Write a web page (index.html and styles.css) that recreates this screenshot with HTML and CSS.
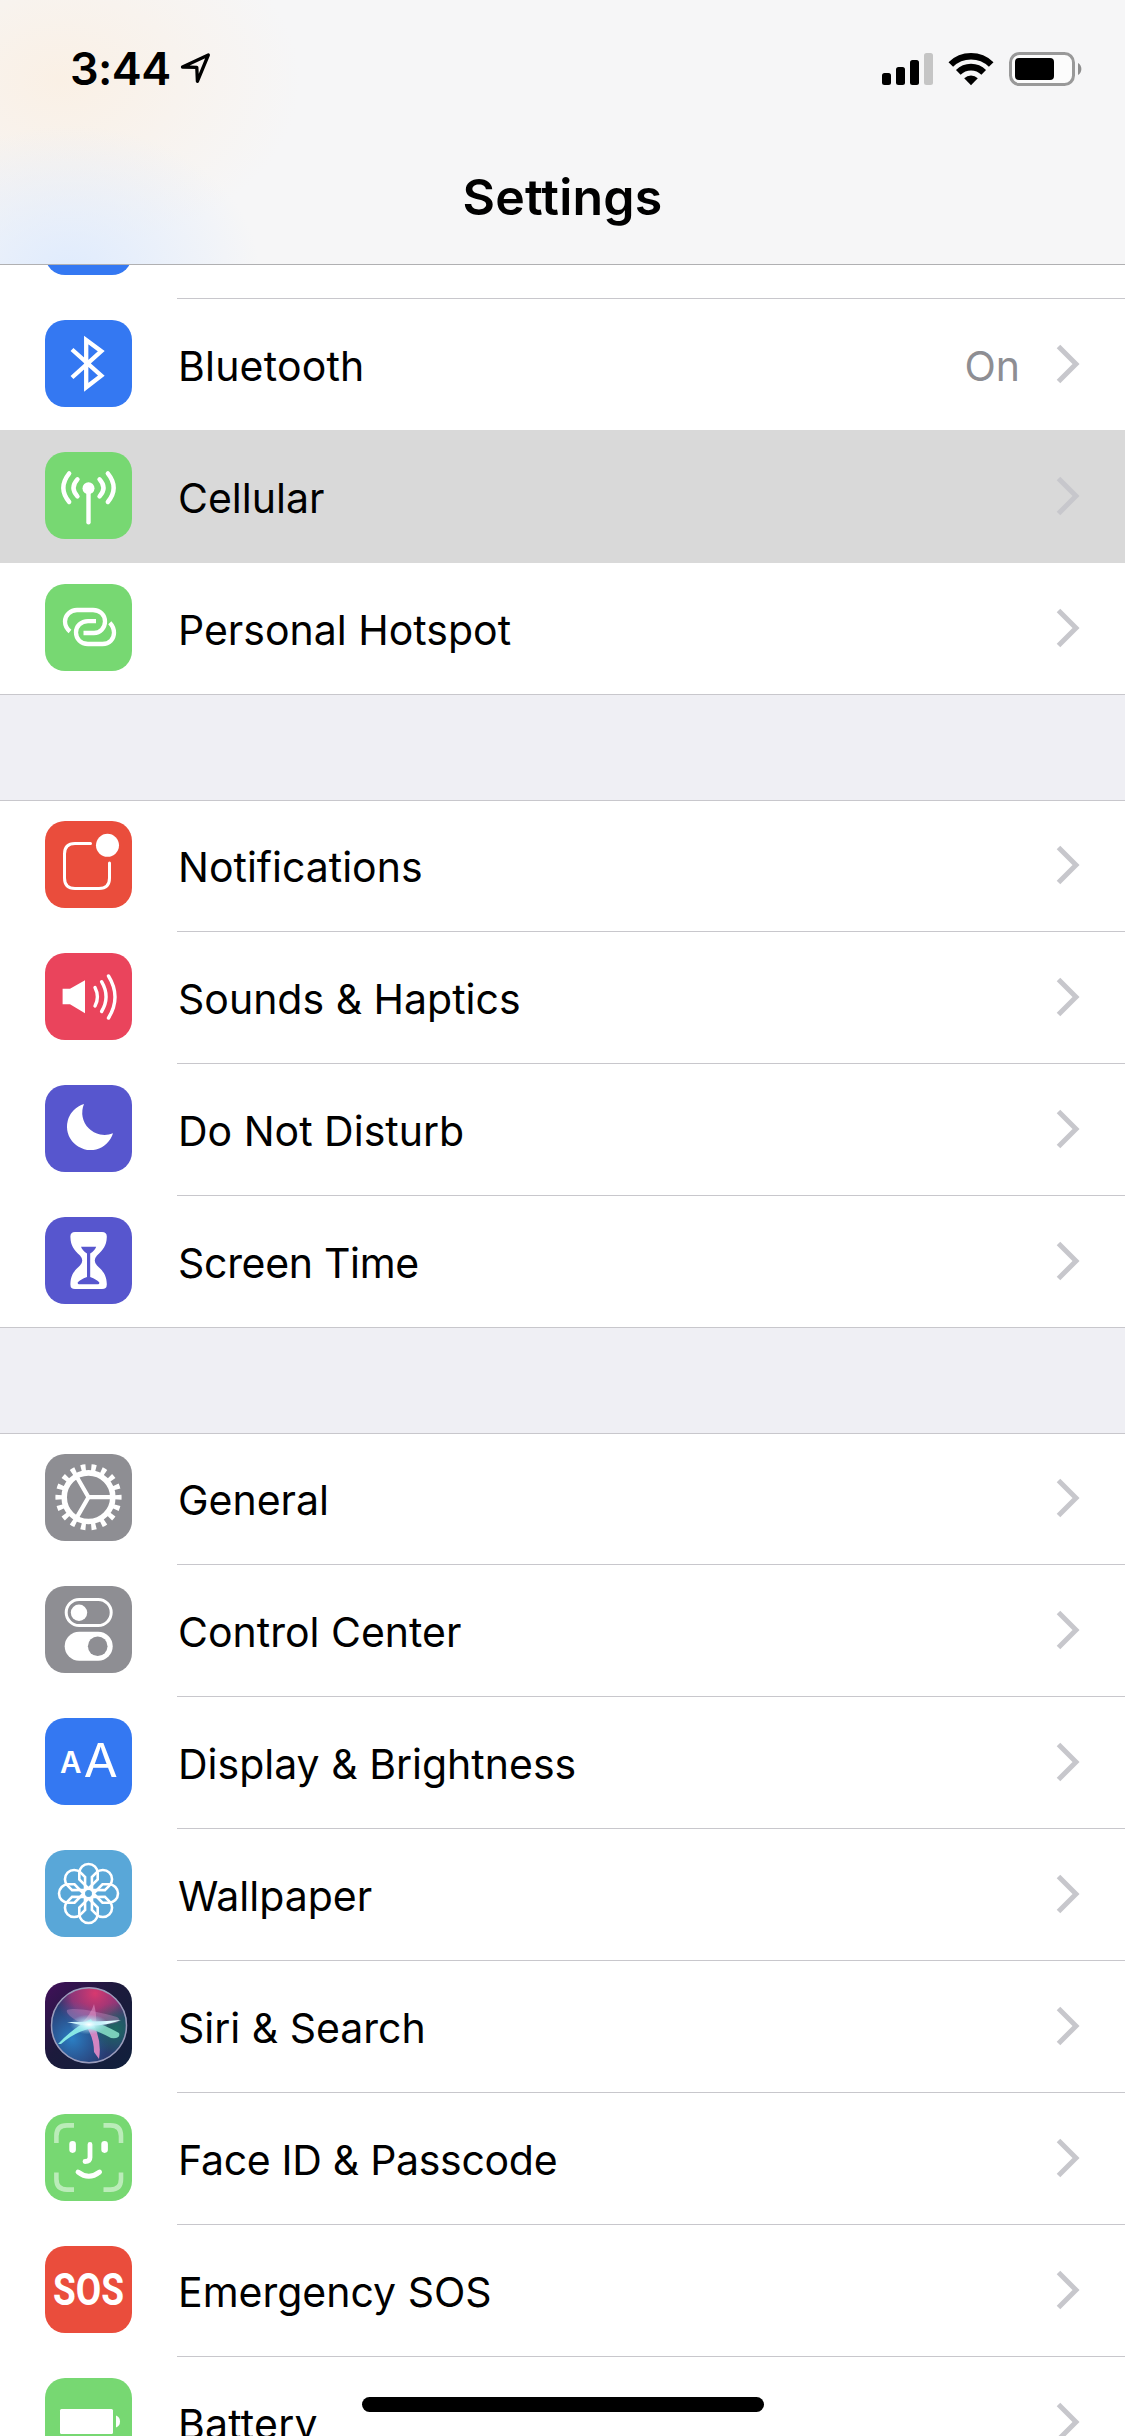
FILE: index.html
```html
<!DOCTYPE html>
<html lang="en">
<head>
    <meta charset="utf-8">
    <title>Settings</title>
    <link rel="stylesheet" href="styles.css">
</head>
<body>
    <svg class="defs" width="0" height="0">
        <defs>
            <symbol id="chevron" viewBox="0 0 24 40">
                <path d="M2.5 2.5 L20 20 L2.5 37.5" fill="none" stroke="#c7c7cc" stroke-width="5"/>
            </symbol>
            <path id="petal" d="M43.5 38.5 L34.3 29.5 V23.2 A9.2 9.2 0 0 1 52.7 23.2 V29.5 Z"/>
        </defs>
    </svg>

    <header class="header">
        <div class="status-bar">
            <div class="status-left">
                <span class="time">3:44</span>
                <svg class="location" width="32" height="32" viewBox="0 0 32 32">
                    <path d="M2.5 15 L28.3 3 L17.4 29.3 L16.8 15.4 Z" fill="none" stroke="#000" stroke-width="3.3" stroke-linejoin="round"/>
                </svg>
            </div>
            <div class="status-right">
                <svg width="51" height="34" viewBox="0 0 51 34">
                    <rect x="0" y="21" width="9" height="12" rx="2.5"/>
                    <rect x="14" y="15" width="9" height="18" rx="2.5"/>
                    <rect x="28" y="8" width="9" height="25" rx="2.5"/>
                    <rect x="42" y="1" width="9" height="32" rx="2.5" fill="#c5c5c5"/>
                </svg>
                <svg width="46" height="34" viewBox="0 0 46 34">
                    <g fill="none" stroke="#000" stroke-width="6.6">
                        <path d="M2.8 12.5 A29 29 0 0 1 43.2 12.5"/>
                        <path d="M10.3 20.4 A18 18 0 0 1 35.7 20.4"/>
                    </g>
                    <path d="M23 33.2 L16.2 26.2 A10 10 0 0 1 29.8 26.2 Z"/>
                </svg>
                <svg width="75" height="34" viewBox="0 0 75 34">
                    <rect x="1.5" y="1.5" width="63" height="31" rx="9" fill="#fcfcfc" stroke="#999" stroke-width="3"/>
                    <rect x="6" y="6" width="39" height="22" rx="4"/>
                    <path d="M69 11 A7 7 0 0 1 69 23 Z" fill="#8e8e8e"/>
                </svg>
            </div>
        </div>
        <h1 class="title">Settings</h1>
    </header>

    <main class="list">
        <section class="group">
            <div class="row">
                <svg class="icon blue" viewBox="0 0 87 87"></svg>
                <div class="row-body"></div>
            </div>
            <div class="row">
                <svg class="icon blue" viewBox="0 0 87 87">
                    <path class="line" d="M27 29.5 L56.3 55.6 L41.2 67.3 V20 L56.3 31.2 L27 57.5" stroke-width="4.3"/>
                </svg>
                <div class="row-body">
                    <span class="label bluetooth">Bluetooth</span>
                    <span class="value">On</span>
                    <svg class="chevron"><use href="#chevron"/></svg>
                </div>
            </div>
            <div class="row pressed">
                <svg class="icon green" viewBox="0 0 87 87">
                    <circle cx="43.5" cy="36.3" r="6" fill="#fff"/>
                    <g class="line round" stroke-width="4.4">
                        <path d="M43.5 38 V70.2"/>
                        <path d="M32.5 27.3 Q24.5 36 32.5 44.5"/>
                        <path d="M54.5 27.3 Q62.5 36 54.5 44.5"/>
                        <path d="M24.2 21.4 Q12.5 36 24.2 50"/>
                        <path d="M62.8 21.4 Q74.5 36 62.8 50"/>
                    </g>
                </svg>
                <div class="row-body">
                    <span class="label">Cellular</span>
                    <svg class="chevron"><use href="#chevron"/></svg>
                </div>
            </div>
            <div class="row">
                <svg class="icon green" viewBox="0 0 87 87">
                    <g class="line" stroke-width="4.3">
                        <path d="M25 47.5 C21.5 44.5 20 41 20 37.5 C20 31 25.5 26 32 26 H48 C55 26 60 31 60 37.5 C60 44 55 49 49 49 H38.5"/>
                        <path d="M51 37.2 H43 C36 37.2 31 42 31 48.5 C31 55 36 60 43 60 H57.5 C64.5 60 69 55 69 48.8 C69 45 67.5 41.5 64.8 38.7"/>
                    </g>
                </svg>
                <div class="row-body">
                    <span class="label">Personal Hotspot</span>
                    <svg class="chevron"><use href="#chevron"/></svg>
                </div>
            </div>
        </section>

        <section class="group">
            <div class="row">
                <svg class="icon red" viewBox="0 0 87 87">
                    <path class="line round" d="M45.5 22.5 H30 Q19.5 22.5 19.5 33 V57 Q19.5 67.5 30 67.5 H54 Q64.5 67.5 64.5 57 V42" stroke-width="3"/>
                    <circle cx="62.5" cy="24.3" r="11.5" fill="#fff"/>
                </svg>
                <div class="row-body">
                    <span class="label">Notifications</span>
                    <svg class="chevron"><use href="#chevron"/></svg>
                </div>
            </div>
            <div class="row">
                <svg class="icon pink" viewBox="0 0 87 87">
                    <path d="M17.6 35.7 H25 L40 27.3 V60.3 L25 51.3 H17.6 Z" fill="#fff"/>
                    <g class="line round" stroke-width="3.4">
                        <path d="M50 34.5 Q54.8 44 50 53"/>
                        <path d="M56.6 28.7 Q65.5 44 56.6 58.5"/>
                        <path d="M63.5 23 Q76.5 44 63.5 65"/>
                    </g>
                </svg>
                <div class="row-body">
                    <span class="label">Sounds &amp; Haptics</span>
                    <svg class="chevron"><use href="#chevron"/></svg>
                </div>
            </div>
            <div class="row">
                <svg class="icon purple" viewBox="0 0 87 87">
                    <path d="M39 19 A23.5 23.5 0 1 0 68 48.3 A22.3 22.3 0 0 1 39 19 Z" fill="#fff"/>
                </svg>
                <div class="row-body">
                    <span class="label">Do Not Disturb</span>
                    <svg class="chevron"><use href="#chevron"/></svg>
                </div>
            </div>
            <div class="row">
                <svg class="icon purple" viewBox="0 0 87 87">
                    <path d="M30 15 H57 Q62 15 61.8 20 C61.5 29 58 33 52 38.5 Q47.5 43.5 52 48.5 C58 54 61.5 58 61.8 67 Q62 72 57 72 H30 Q25.2 72 25.4 67 C25.7 58 29 54 35 48.5 Q39.5 43.5 35 38.5 C29 33 25.7 29 25.4 20 Q25.2 15 30 15 Z" fill="#fff"/>
                    <path d="M36 29.7 H51.2 Q50 33.5 45.2 36.5 V60 Q52 62.5 54.3 65.5 Q54.5 67.3 53 67.3 H34 Q32.5 67.3 32.7 65.5 Q35 62.5 42 60 V36.5 Q37.2 33.5 36 29.7 Z" fill="#5756ce"/>
                </svg>
                <div class="row-body">
                    <span class="label narrow">Screen Time</span>
                    <svg class="chevron"><use href="#chevron"/></svg>
                </div>
            </div>
        </section>

        <section class="group">
            <div class="row">
                <svg class="icon gray" viewBox="0 0 87 87">
                    <g class="line">
                        <circle cx="43.5" cy="43.2" r="24.3" stroke-width="5.6"/>
                        <circle cx="43.5" cy="43.2" r="29.6" stroke-width="7" pathLength="36" stroke-dasharray="0.9 1.1" stroke-dashoffset="0.45"/>
                        <path d="M43.5 43.2 H66 M43.5 43.2 L32 23.3 M43.5 43.2 L32 63.1" stroke-width="4.2"/>
                    </g>
                </svg>
                <div class="row-body">
                    <span class="label">General</span>
                    <svg class="chevron"><use href="#chevron"/></svg>
                </div>
            </div>
            <div class="row">
                <svg class="icon gray" viewBox="0 0 87 87">
                    <rect class="line" x="21.2" y="13.5" width="45" height="26" rx="13" stroke-width="3"/>
                    <circle cx="34" cy="26.7" r="8.2" fill="#fff"/>
                    <rect x="19.7" y="45.7" width="48" height="29" rx="14.5" fill="#fff"/>
                    <circle cx="52.7" cy="60.2" r="9.8" fill="#8e8e93"/>
                </svg>
                <div class="row-body">
                    <span class="label">Control Center</span>
                    <svg class="chevron"><use href="#chevron"/></svg>
                </div>
            </div>
            <div class="row">
                <svg class="icon blue" viewBox="0 0 87 87">
                    <text x="15" y="54.8" font-size="29.5" font-weight="600" textLength="21.5" lengthAdjust="spacingAndGlyphs">A</text>
                    <text x="38.7" y="59" font-size="47" textLength="34" lengthAdjust="spacingAndGlyphs">A</text>
                </svg>
                <div class="row-body">
                    <span class="label">Display &amp; Brightness</span>
                    <svg class="chevron"><use href="#chevron"/></svg>
                </div>
            </div>
            <div class="row">
                <svg class="icon sky" viewBox="0 0 87 87">
                    <g class="line" stroke-width="2.6">
                        <use href="#petal"/>
                        <use href="#petal" transform="rotate(45 43.5 43.5)"/>
                        <use href="#petal" transform="rotate(90 43.5 43.5)"/>
                        <use href="#petal" transform="rotate(135 43.5 43.5)"/>
                        <use href="#petal" transform="rotate(180 43.5 43.5)"/>
                        <use href="#petal" transform="rotate(225 43.5 43.5)"/>
                        <use href="#petal" transform="rotate(270 43.5 43.5)"/>
                        <use href="#petal" transform="rotate(315 43.5 43.5)"/>
                        <circle cx="43.5" cy="43.5" r="4.8"/>
                    </g>
                </svg>
                <div class="row-body">
                    <span class="label">Wallpaper</span>
                    <svg class="chevron"><use href="#chevron"/></svg>
                </div>
            </div>
            <div class="row">
                <svg class="icon siri" viewBox="0 0 87 87">
                    <defs>
                        <radialGradient id="siriPink" cx="0.58" cy="0.08" r="0.52">
                            <stop offset="0" stop-color="#d8396f"/>
                            <stop offset="0.6" stop-color="#a8347a" stop-opacity="0.8"/>
                            <stop offset="1" stop-color="#8a2a78" stop-opacity="0"/>
                        </radialGradient>
                        <radialGradient id="siriBlue" cx="0.28" cy="0.68" r="0.5">
                            <stop offset="0" stop-color="#2b7fc4"/>
                            <stop offset="1" stop-color="#2b6fb4" stop-opacity="0"/>
                        </radialGradient>
                        <radialGradient id="siriTeal" cx="0.85" cy="0.55" r="0.35">
                            <stop offset="0" stop-color="#1d6a62"/>
                            <stop offset="1" stop-color="#1d6a62" stop-opacity="0"/>
                        </radialGradient>
                        <radialGradient id="siriGlow">
                            <stop offset="0" stop-color="#fff"/>
                            <stop offset="0.35" stop-color="#c5f2fa" stop-opacity="0.8"/>
                            <stop offset="1" stop-color="#8fd8f0" stop-opacity="0"/>
                        </radialGradient>
                    </defs>
                    <circle cx="44" cy="43.3" r="38" fill="#293a70"/>
                    <circle cx="44" cy="43.3" r="38" fill="url(#siriPink)"/>
                    <circle cx="44" cy="43.3" r="38" fill="url(#siriBlue)"/>
                    <circle cx="44" cy="43.3" r="38" fill="url(#siriTeal)"/>
                    <path d="M44 43 C32 41 20 32 22 28 C30 25 50 29 72 35 C78 39 74 43 44 43 Z" fill="#c78fc6" fill-opacity="0.4"/>
                    <path d="M37 41 Q46 32 49 22 Q52 33 51 43 Z" fill="#e08dc2" fill-opacity="0.6"/>
                    <path d="M41 44 Q49 56 49 70 L54 77 Q57 60 49 43 Z" fill="#e48bc8" fill-opacity="0.9"/>
                    <path d="M44 38 Q60 43 74 51 Q76 57 66 56 Q55 50 43 46 Z" fill="#84dcc3" fill-opacity="0.9"/>
                    <path d="M13 62 Q29 45 46 37 L50 46 Q32 48 16 62 Z" fill="#87e8e5"/>
                    <path d="M22 40 Q47 40 76 38 Q50 48 22 40 Z" fill="#ddfaff"/>
                    <ellipse cx="44" cy="42.5" rx="19" ry="10" fill="url(#siriGlow)"/>
                    <circle cx="44" cy="43.3" r="37.5" fill="none" stroke="#9b9cbb" stroke-width="1.5"/>
                </svg>
                <div class="row-body">
                    <span class="label">Siri &amp; Search</span>
                    <svg class="chevron"><use href="#chevron"/></svg>
                </div>
            </div>
            <div class="row">
                <svg class="icon green" viewBox="0 0 87 87">
                    <g class="line" stroke-width="4.6" stroke-opacity="0.5">
                        <path d="M11.4 29 V22 Q11.4 11.4 22 11.4 H29"/>
                        <path d="M58.5 11.4 H65.5 Q76 11.4 76 22 V29"/>
                        <path d="M11.4 58.5 V65 Q11.4 75.6 22 75.6 H29"/>
                        <path d="M58.5 75.6 H65.5 Q76 75.6 76 65 V58.5"/>
                    </g>
                    <g class="line round">
                        <path d="M27.6 30.2 V35.6 M59.6 30.2 V35.6" stroke-width="6.6"/>
                        <path d="M45 30.5 V43.5 Q45 47.5 40 47.5" stroke-width="4.8"/>
                        <path d="M33 58 Q43.8 66.5 54.6 58" stroke-width="4.8"/>
                    </g>
                </svg>
                <div class="row-body">
                    <span class="label narrow">Face ID &amp; Passcode</span>
                    <svg class="chevron"><use href="#chevron"/></svg>
                </div>
            </div>
            <div class="row">
                <svg class="icon red" viewBox="0 0 87 87">
                    <text class="sos" x="8" y="59.3" textLength="71" lengthAdjust="spacingAndGlyphs">SOS</text>
                </svg>
                <div class="row-body">
                    <span class="label">Emergency SOS</span>
                    <svg class="chevron"><use href="#chevron"/></svg>
                </div>
            </div>
            <div class="row">
                <svg class="icon green" viewBox="0 0 87 87">
                    <rect x="15" y="31" width="53" height="25" rx="1.5" fill="#fff"/>
                    <path d="M71 37.5 Q75 39 75 43.5 Q75 48 71 49.5 Z" fill="#fff"/>
                </svg>
                <div class="row-body">
                    <span class="label bluetooth">Battery</span>
                    <svg class="chevron"><use href="#chevron"/></svg>
                </div>
            </div>
        </section>
    </main>

    <div class="home-indicator"></div>
</body>
</html>
```
FILE: styles.css
```css
* {
    box-sizing: border-box;
}
body {
    position: relative;
    width: 1125px;
    height: 2436px;
    margin: 0;
    overflow: hidden;
    background: #efeff4;
    color: #000;
    font-family: Inter, "Liberation Sans", sans-serif;
}
.defs {
    display: block;
}

/* header */
.header {
    position: relative;
    z-index: 1;
    height: 265px;
    border-bottom: 1px solid #b0b0b2;
    background:
        radial-gradient(ellipse 190px 150px at 70px 275px, #dfebfd 0%, rgba(223, 235, 253, 0) 100%),
        radial-gradient(ellipse 240px 170px at 60px 80px, #faf0e5 0%, rgba(250, 240, 229, 0) 100%),
        #f6f6f7;
}
.status-bar {
    display: flex;
    justify-content: space-between;
    height: 140px;
    padding: 52px 41px 0 70px;
}
.status-left {
    display: flex;
}
.time {
    width: 110px;
    font-size: 45px;
    font-weight: 600;
    line-height: 34px;
    letter-spacing: -0.6px;
}
.status-right {
    display: flex;
    gap: 15px;
}
.title {
    margin: 0;
    text-align: center;
    font-size: 50px;
    font-weight: 600;
    line-height: 115px;
    letter-spacing: 0.2px;
}

/* list, scrolled so the first row sits under the header */
.list {
    margin-top: -98px;
}
.group {
    background: #fff;
    box-shadow: inset 0 -1px #c8c7cc;
}
.group + .group {
    margin-top: 105px;
    box-shadow: inset 0 1px #c8c7cc, inset 0 -1px #c8c7cc;
}
.row {
    display: flex;
    height: 132px;
    padding-left: 45px;
}
/* covers the separator of the row above */
.row.pressed {
    position: relative;
    height: 133px;
    margin-top: -1px;
    padding-top: 1px;
    background: #d9d9d9;
}
.row-body {
    flex: 1;
    display: flex;
    align-items: center;
    padding: 4px 45px 3px 0;
    border-bottom: 1px solid #c8c7cc;
}
.pressed .row-body {
    border-color: transparent;
}
.label {
    flex: 1;
    padding: 2px 0 0 1px;
    font-size: 41px;
    line-height: 50px;
}
.label.bluetooth {
    letter-spacing: 0.2px;
}
.label.narrow {
    letter-spacing: -0.3px;
}
.value {
    margin-right: 36px;
    padding-top: 2px;
    color: #8e8e93;
    font-size: 41px;
    line-height: 50px;
}
.chevron {
    width: 24px;
    height: 40px;
    margin-bottom: 3px;
}

/* icons */
.icon {
    width: 87px;
    height: 87px;
    margin: 21px 45px 0 0;
    border-radius: 20px;
}
.icon text {
    fill: #fff;
}
.icon .sos {
    font-family: Roboto, sans-serif;
    font-size: 44px;
    font-weight: 700;
}
.line {
    fill: none;
    stroke: #fff;
}
.round {
    stroke-linecap: round;
    stroke-linejoin: round;
}
.blue {
    background: #3478f2;
}
.green {
    background: #77d872;
}
.red {
    background: #ea4d3c;
}
.pink {
    background: #ea445c;
}
.purple {
    background: #5756ce;
}
.gray {
    background: #8e8e93;
}
.sky {
    background: #59a7d8;
}
.siri {
    background: linear-gradient(135deg, #42105a 0%, #1c1a3c 45%, #10203c 100%);
}

.home-indicator {
    position: absolute;
    z-index: 2;
    left: 362px;
    bottom: 24px;
    width: 402px;
    height: 15px;
    border-radius: 8px;
    background: #000;
}
```
